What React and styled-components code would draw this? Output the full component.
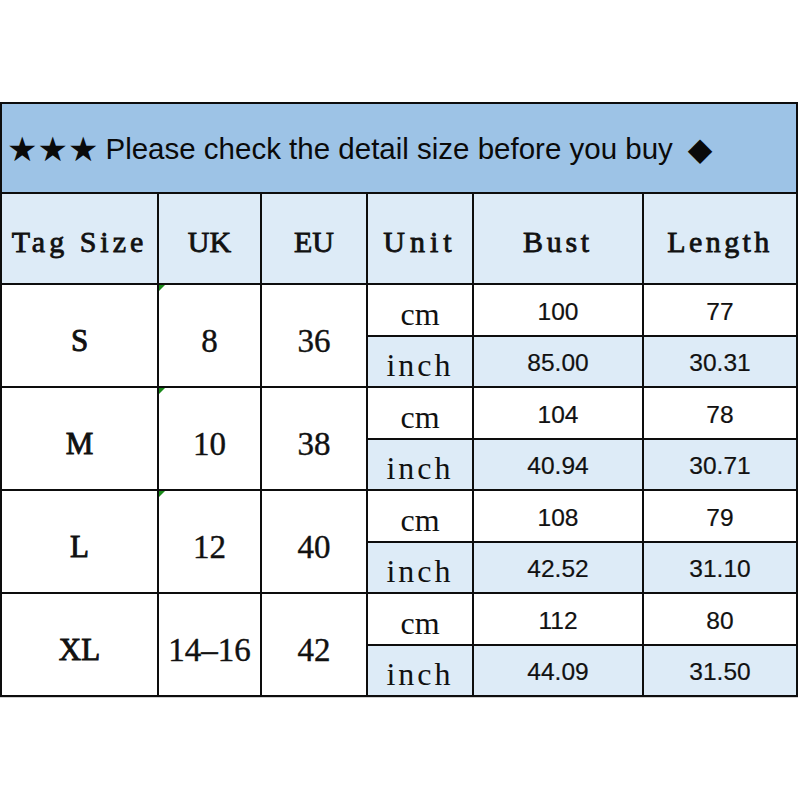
import React from "react";
import styled, { createGlobalStyle } from "styled-components";

const GlobalStyle = createGlobalStyle`
  html, body {
    margin: 0;
    padding: 0;
    background: #ffffff;
  }
`;

// whole page
const Page = styled.div`
  width: 800px;
  height: 800px;
  padding-top: 102px;
  box-sizing: border-box;
  background: #ffffff;
`;

// the sheet: black background + gaps make the grid lines
const Sheet = styled.div`
  display: grid;
  grid-template-columns: 155px 101px 104px 104px 168px 152px;
  grid-template-rows: 88px 89px repeat(4, 50px 49px);
  gap: 2px;
  padding: 2px;
  width: 798px;
  box-sizing: border-box;
  background: #0d0d0d;
  box-shadow: 0 1px 0 #cfcfcf;
`;

const Banner = styled.div`
  grid-column: 1 / -1;
  background: #9dc3e6;
  display: flex;
  align-items: center;
  padding-left: 5px;
  padding-top: 2px;
  box-sizing: border-box;
  font-family: "Liberation Sans", "DejaVu Sans", sans-serif;
  font-size: 29.5px;
  color: #0a0a0a;
  white-space: nowrap;
`;

const Stars = styled.span`
  font-family: "DejaVu Sans", sans-serif;
  font-size: 34px;
  margin-right: 7px;
`;

const Diamond = styled.span`
  font-family: "DejaVu Sans", sans-serif;
  font-size: 32px;
  margin-left: 15px;
`;

const HeadCell = styled.div`
  background: #ddebf7;
  display: flex;
  align-items: center;
  justify-content: center;
  padding-top: 7px;
  box-sizing: border-box;
  font-family: "Liberation Serif", "DejaVu Serif", serif;
  font-size: 30px;
  -webkit-text-stroke: 0.8px #111;
  letter-spacing: ${(p) => (p.$spacing === undefined ? 3.5 : p.$spacing)}px;
  color: #111;
`;

const SizeCell = styled.div`
  grid-row: span 2;
  background: #ffffff;
  position: relative;
  display: flex;
  align-items: center;
  justify-content: center;
  padding-top: 11px;
  box-sizing: border-box;
  font-family: "Liberation Serif", "DejaVu Serif", serif;
  font-size: ${(p) => (p.$tag ? 31 : 33)}px;
  -webkit-text-stroke: ${(p) => (p.$tag ? 0.9 : 0.4)}px #111;
  color: #111;

  ${(p) =>
    p.$flag &&
    `
    &::before {
      content: "";
      position: absolute;
      top: 0;
      left: 0;
      border-top: 6px solid #1a8a1a;
      border-right: 6px solid transparent;
    }
  `}
`;

const UnitCell = styled.div`
  background: ${(p) => (p.$alt ? "#ddebf7" : "#ffffff")};
  display: flex;
  align-items: flex-end;
  justify-content: center;
  padding-bottom: 2px;
  box-sizing: border-box;
  font-family: "Liberation Serif", "DejaVu Serif", serif;
  font-size: 32px;
  letter-spacing: ${(p) => (p.$alt ? 3 : 0)}px;
  color: #111;
`;

const ValueCell = styled.div`
  background: ${(p) => (p.$alt ? "#ddebf7" : "#ffffff")};
  display: flex;
  align-items: center;
  justify-content: center;
  padding-top: 3px;
  box-sizing: border-box;
  font-family: "Liberation Sans", Arial, sans-serif;
  font-size: 24.5px;
  -webkit-text-stroke: 0.2px #111;
  color: #111;
`;

const rows = [
  { tag: "S", uk: "8", eu: "36", cm: ["100", "77"], inch: ["85.00", "30.31"], flag: true },
  { tag: "M", uk: "10", eu: "38", cm: ["104", "78"], inch: ["40.94", "30.71"], flag: true },
  { tag: "L", uk: "12", eu: "40", cm: ["108", "79"], inch: ["42.52", "31.10"], flag: true },
  { tag: "XL", uk: "14\u201316", eu: "42", cm: ["112", "80"], inch: ["44.09", "31.50"], flag: false },
];

export default function App() {
  return (
    <Page>
      <GlobalStyle />
      <Sheet>
        <Banner>
          <Stars>★★★</Stars>
          Please check the detail size before you buy
          <Diamond>◆</Diamond>
        </Banner>

        <HeadCell $spacing={4}>Tag Size</HeadCell>
        <HeadCell $spacing={0}>UK</HeadCell>
        <HeadCell $spacing={0}>EU</HeadCell>
        <HeadCell $spacing={5}>Unit</HeadCell>
        <HeadCell $spacing={3.7}>Bust</HeadCell>
        <HeadCell $spacing={3.4}>Length</HeadCell>

        {rows.map((r) => (
          <React.Fragment key={r.tag}>
            <SizeCell $tag>{r.tag}</SizeCell>
            <SizeCell $flag={r.flag}>{r.uk}</SizeCell>
            <SizeCell>{r.eu}</SizeCell>
            <UnitCell>cm</UnitCell>
            <ValueCell>{r.cm[0]}</ValueCell>
            <ValueCell>{r.cm[1]}</ValueCell>
            <UnitCell $alt>inch</UnitCell>
            <ValueCell $alt>{r.inch[0]}</ValueCell>
            <ValueCell $alt>{r.inch[1]}</ValueCell>
          </React.Fragment>
        ))}
      </Sheet>
    </Page>
  );
}
